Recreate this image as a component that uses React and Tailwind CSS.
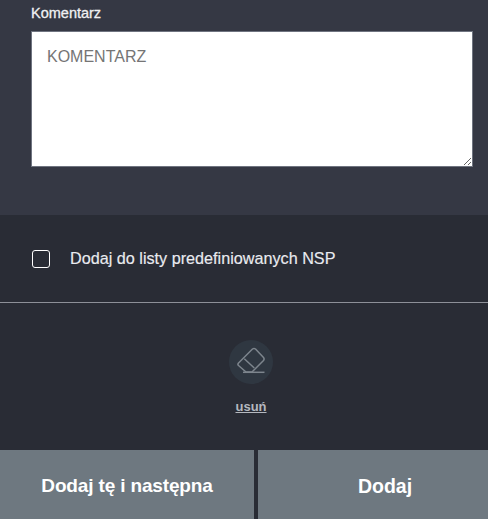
export default function App() {
  return (
    <div className="w-[488px] h-[519px] overflow-hidden flex flex-col font-['Liberation_Sans',Arial,sans-serif] bg-[#292c35]">
      <div className="h-[215px] bg-[#353844] pl-[31px] pt-[5px] flex flex-col">
        <label className="text-[14.5px] leading-[16px] [-webkit-text-stroke:0.3px] text-[#f0f0f2] h-[26px]">Komentarz</label>
        <textarea
          placeholder="KOMENTARZ"
          className="w-[442px] h-[136px] bg-white border border-[#6f7480] px-[15px] pt-[15px] pb-[13px] text-[16px] leading-[20px] text-[#333] placeholder:text-[#757575] outline-none"
        />
      </div>
      <div className="h-[88px] flex items-center gap-[20px] pl-[32px] border-b border-[#8d9098]">
        <span className="w-[18px] h-[18px] rounded-[3px] border border-white" />
        <span className="text-[16.2px] leading-[20px] pb-[2px] [-webkit-text-stroke:0.15px] text-[#e9ebf0]">Dodaj do listy predefiniowanych NSP</span>
      </div>
      <div className="h-[147px] flex flex-col items-center pt-[37px] pl-[14px]">
        <div className="w-[44px] h-[44px] rounded-full bg-[#2f3741] flex items-center justify-center">
          <svg width="44" height="44" viewBox="0 0 44 44" fill="none" stroke="#7d858d" strokeWidth="1.5" strokeLinejoin="round">
            <path d="M23.5 9 Q25 7.8 26.5 9 L34.5 17.5 Q35.7 19 34.5 20.5 L23 32 H17 L9.5 25.5 Q8.3 24.5 9.5 23 Z" />
            <path d="M15.3 18.7 L25.3 28" />
            <path d="M14 32.3 H35.5" />
          </svg>
        </div>
        <a className="mt-[15px] text-[13px] leading-[16px] font-bold text-[#b4b8bf] underline">usuń</a>
      </div>
      <div className="h-[69px] flex gap-[4px]">
        <button className="w-[254px] bg-[#6e7880] text-white font-bold text-[19px] tracking-[-0.15px] pt-[4px]">Dodaj tę i następna</button>
        <button className="flex-1 bg-[#6e7880] text-white font-bold text-[19.5px] pl-[24px] pt-[4px]">Dodaj</button>
      </div>
    </div>
  );
}
